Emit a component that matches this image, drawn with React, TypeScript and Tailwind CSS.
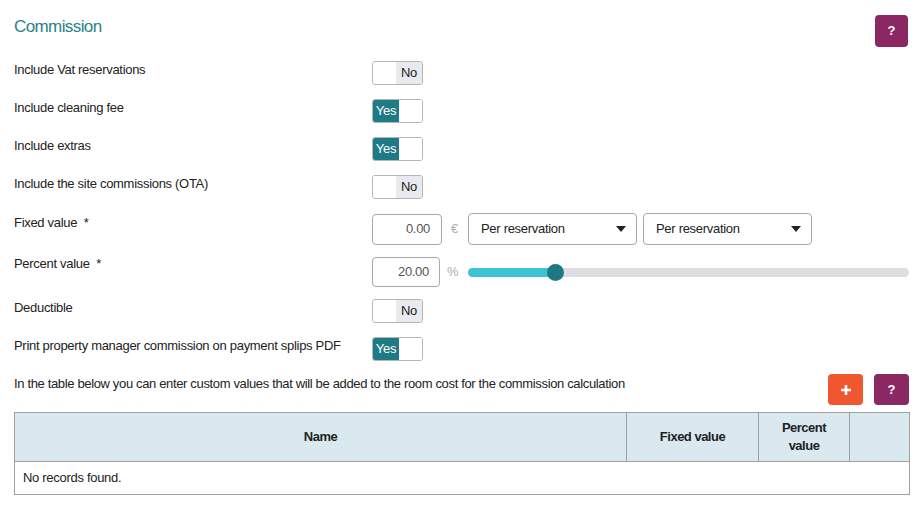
import React from "react";

const font = { fontFamily: '"Liberation Sans", Arial, sans-serif' };

function Toggle({ on }: { on: boolean }) {
  return (
    <div className="flex h-[24px] w-[51px] overflow-hidden rounded-[3px] border border-[#b5b5b5] text-[13px] leading-[22px] tracking-[-0.3px]">
      {on ? (
        <>
          <div className="w-[26px] bg-[#1e7b85] text-center text-white">Yes</div>
          <div className="flex-1 bg-white" />
        </>
      ) : (
        <>
          <div className="flex-1 bg-white" />
          <div className="w-[26px] bg-[#e8eaee] text-center text-[#222]">No</div>
        </>
      )}
    </div>
  );
}

function Caret() {
  return (
    <svg width="10" height="6" viewBox="0 0 10 6">
      <path d="M0 0 L10 0 L5 6 Z" fill="#222" />
    </svg>
  );
}

function Select() {
  return (
    <div className="flex h-[32px] w-[169px] items-center justify-between rounded-[4px] border border-[#a8a8a8] bg-white pl-[12px] pr-[10px] text-[13px] tracking-[-0.3px] text-[#222]">
      <span>Per reservation</span>
      <Caret />
    </div>
  );
}

function ToggleRow({ label, on }: { label: string; on: boolean }) {
  return (
    <div className="flex h-[38px] items-start">
      <div className="w-[358px] pt-[1px] text-[13px] leading-[20px] tracking-[-0.3px] text-[#222]">{label}</div>
      <div className="mt-[2px]">
        <Toggle on={on} />
      </div>
    </div>
  );
}

export default function App() {
  return (
    <div className="h-[526px] w-[921px] bg-white pl-[14px] pr-[12px]" style={font}>
      <div className="flex h-[59px] items-start justify-between pt-[15px]">
        <div className="text-[17px] leading-[24px] tracking-[-0.6px] text-[#2a7f88]">Commission</div>
        <button className="mr-[1px] flex h-[32px] w-[33px] items-center justify-center rounded-[4px] bg-[#8b2864] text-[13px] font-bold text-white">
          ?
        </button>
      </div>

      <ToggleRow label="Include Vat reservations" on={false} />
      <ToggleRow label="Include cleaning fee" on={true} />
      <ToggleRow label="Include extras" on={true} />
      <ToggleRow label="Include the site commissions (OTA)" on={false} />

      {/* Fixed value */}
      <div className="flex h-[44px] items-start pt-[2px]">
        <div className="w-[358px] text-[13px] leading-[20px] tracking-[-0.3px] text-[#222]">Fixed value&nbsp; *</div>
        <div className="flex items-center">
          <div className="flex h-[31px] w-[70px] items-center justify-end rounded-[4px] border border-[#a8a8a8] pr-[11px] text-[13px] tracking-[-0.3px] text-[#555]">
            0.00
          </div>
          <span className="ml-[9px] w-[17px] text-[13px] text-[#b0b0b0]">€</span>
          <div className="flex gap-[6px]">
            <Select />
            <Select />
          </div>
        </div>
      </div>

      {/* Percent value */}
      <div className="flex h-[42px] items-start pt-[2px]">
        <div className="-mt-[3px] w-[358px] text-[13px] leading-[20px] tracking-[-0.3px] text-[#222]">Percent value&nbsp; *</div>
        <div className="flex flex-1 items-center">
          <div className="flex h-[30px] w-[68px] items-center justify-end rounded-[4px] border border-[#a8a8a8] pr-[10px] text-[13px] tracking-[-0.3px] text-[#555]">
            20.00
          </div>
          <span className="ml-[7px] w-[21px] text-[13px] text-[#b0b0b0]">%</span>
          <div className="relative h-[9px] flex-1 rounded-full bg-[#dcdee2]">
            <div className="h-full w-[88px] rounded-full bg-[#3cc3d5]" />
            <div className="absolute left-[79px] top-[-4px] h-[17px] w-[17px] rounded-full bg-[#1d7a85]" />
          </div>
        </div>
      </div>

      <ToggleRow label="Deductible" on={false} />
      <ToggleRow label="Print property manager commission on payment splips PDF" on={true} />

      <div className="flex h-[39px] items-start justify-between pt-[1px]">
        <div className="text-[13px] leading-[20px] tracking-[-0.35px] text-[#222]">
          In the table below you can enter custom values that will be added to the room cost for the commission calculation
        </div>
        <div className="flex gap-[11px]">
          <button className="flex h-[31px] w-[35px] items-center justify-center rounded-[4px] bg-[#f0572e]">
            <svg width="12" height="12" viewBox="0 0 12 12">
              <path d="M6 1 V11 M1 6 H11" stroke="white" strokeWidth="2.6" />
            </svg>
          </button>
          <button className="flex h-[31px] w-[35px] items-center justify-center rounded-[4px] bg-[#8b2864] text-[13px] font-bold text-white">
            ?
          </button>
        </div>
      </div>

      <table className="w-[896px] border-collapse text-[13px] tracking-[-0.5px] text-[#222]">
        <thead>
          <tr className="h-[49px] bg-[#dae8ef]">
            <th className="w-[612px] border border-[#a0a0a0] font-bold">Name</th>
            <th className="w-[132px] border border-[#a0a0a0] font-bold">Fixed value</th>
            <th className="w-[91px] border border-[#a0a0a0] font-bold leading-[18px]">
              Percent
              <br />
              value
            </th>
            <th className="border border-[#a0a0a0]"></th>
          </tr>
        </thead>
        <tbody>
          <tr className="h-[33px]">
            <td colSpan={4} className="border border-[#a0a0a0] pl-[8px] tracking-[-0.3px]">
              No records found.
            </td>
          </tr>
        </tbody>
      </table>
    </div>
  );
}
